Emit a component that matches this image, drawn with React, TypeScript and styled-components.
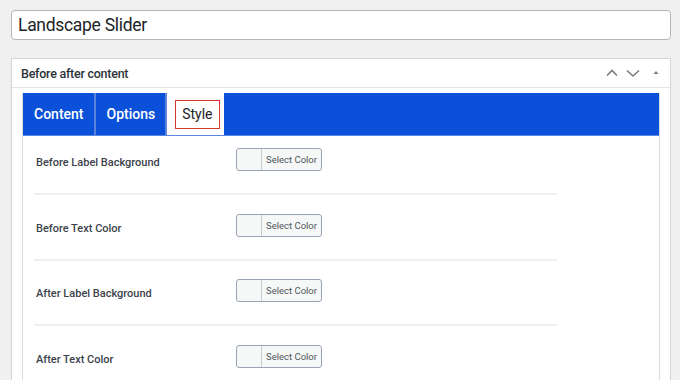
import React from "react";
import styled, { createGlobalStyle } from "styled-components";

const Global = createGlobalStyle`
  html, body {
    margin: 0;
    padding: 0;
    background: #f0f0f1;
    font-family: Roboto, "Liberation Sans", Arial, sans-serif;
    color: #1d2327;
  }
`;

const Page = styled.div`
  padding: 10px 9px 0 11px;
  height: 380px;
  box-sizing: border-box;
  overflow: hidden;
`;

const TitleInput = styled.div`
  height: 30px;
  box-sizing: border-box;
  border: 1px solid #b4b7ba;
  border-radius: 4px;
  background: #fff;
  display: flex;
  align-items: center;
  padding: 0 6px;
  font-size: 17.5px;
  letter-spacing: -0.3px;
  color: #1d2327;
`;

const Postbox = styled.div`
  margin-top: 18px;
  background: #fff;
  border: 1px solid #d3d4d6;
  border-bottom: none;
  height: 400px;
`;

const PostboxHeader = styled.div`
  height: 28px;
  display: flex;
  align-items: center;
  justify-content: space-between;
  padding: 0 9px 0 9px;
  border-bottom: 1px solid #e3e4e6;
`;

const HeaderTitle = styled.h2`
  margin: 0;
  font-size: 12.5px;
  font-weight: 500;
  letter-spacing: -0.25px;
  color: #2c3338;
`;

const HeaderActions = styled.div`
  display: flex;
  align-items: center;
  gap: 7px;
  color: #787c82;
`;

const Inner = styled.div`
  margin: 5px 10px 0 10px;
  border-left: 1px solid #dcdcde;
  border-right: 1px solid #dcdcde;
  height: 400px;
`;

const TabBar = styled.div`
  display: flex;
  height: 42px;
  background: #0a50d8;
  border-bottom: 1px solid #5a86e4;
`;

const Tab = styled.div<{ $active?: boolean }>`
  display: flex;
  align-items: center;
  justify-content: center;
  padding: ${({ $active }) => ($active ? "0 4px 0 8px" : "0 10px 0 11px")};
  background: ${({ $active }) => ($active ? "#fff" : "transparent")};
  color: ${({ $active }) => ($active ? "#1d2327" : "#fff")};
  font-size: 14px;
  font-weight: ${({ $active }) => ($active ? 400 : 500)};
  border-right: ${({ $active }) => ($active ? "none" : "2px solid #5b83dc")};
`;

const ActiveLabel = styled.span`
  display: flex;
  align-items: center;
  height: 29px;
  box-sizing: border-box;
  padding: 0 6px;
  border: 1.5px solid #d8392f;
`;

const Rows = styled.div`
  padding: 0 0 0 11px;
  width: 523px;
`;

const Row = styled.div<{ $first?: boolean }>`
  display: flex;
  align-items: flex-start;
  padding: ${({ $first }) => ($first ? "12px" : "18.5px")} 0 22px 2px;
  border-bottom: 2px solid #efeff0;
`;

const Label = styled.div`
  width: 200px;
  padding-top: 8px;
  font-size: 11px;
  line-height: 14px;
  font-weight: 500;
  color: #3c434a;
`;

const ColorButton = styled.div`
  display: flex;
  height: 23px;
  box-sizing: border-box;
  border: 1px solid #9aa3b5;
  border-radius: 3px;
  background: #f6f7f7;
  overflow: hidden;
`;

const Swatch = styled.span`
  width: 24px;
  border-right: 1px solid #c9ccd1;
`;

const ButtonText = styled.span`
  display: flex;
  align-items: center;
  padding: 0 4px 0 4px;
  font-size: 9.5px;
  color: #50575e;
`;

const Chevron = ({ up }: { up?: boolean }) => (
  <svg width="14" height="10" viewBox="0 0 14 10">
    <path
      d={up ? "M2 7.5 L7 2.5 L12 7.5" : "M1 2.5 L7 8 L13 2.5"}
      fill="none"
      stroke="currentColor"
      strokeWidth="1.6"
    />
  </svg>
);

const Caret = () => (
  <svg width="10" height="10" viewBox="0 0 10 10" style={{ marginLeft: 4 }}>
    <path d="M2.5 6 L5 3 L7.5 6 Z" fill="currentColor" />
  </svg>
);

const fields = [
  "Before Label Background",
  "Before Text Color",
  "After Label Background",
  "After Text Color",
];

export default function App() {
  return (
    <>
      <Global />
      <Page>
        <TitleInput>Landscape Slider</TitleInput>
        <Postbox>
          <PostboxHeader>
            <HeaderTitle>Before after content</HeaderTitle>
            <HeaderActions>
              <Chevron up />
              <Chevron />
              <Caret />
            </HeaderActions>
          </PostboxHeader>
          <Inner>
            <TabBar>
              <Tab>Content</Tab>
              <Tab>Options</Tab>
              <Tab $active>
                <ActiveLabel>Style</ActiveLabel>
              </Tab>
            </TabBar>
            <Rows>
              {fields.map((f, i) => (
                <Row key={f} $first={i === 0}>
                  <Label>{f}</Label>
                  <ColorButton>
                    <Swatch />
                    <ButtonText>Select Color</ButtonText>
                  </ColorButton>
                </Row>
              ))}
            </Rows>
          </Inner>
        </Postbox>
      </Page>
    </>
  );
}
